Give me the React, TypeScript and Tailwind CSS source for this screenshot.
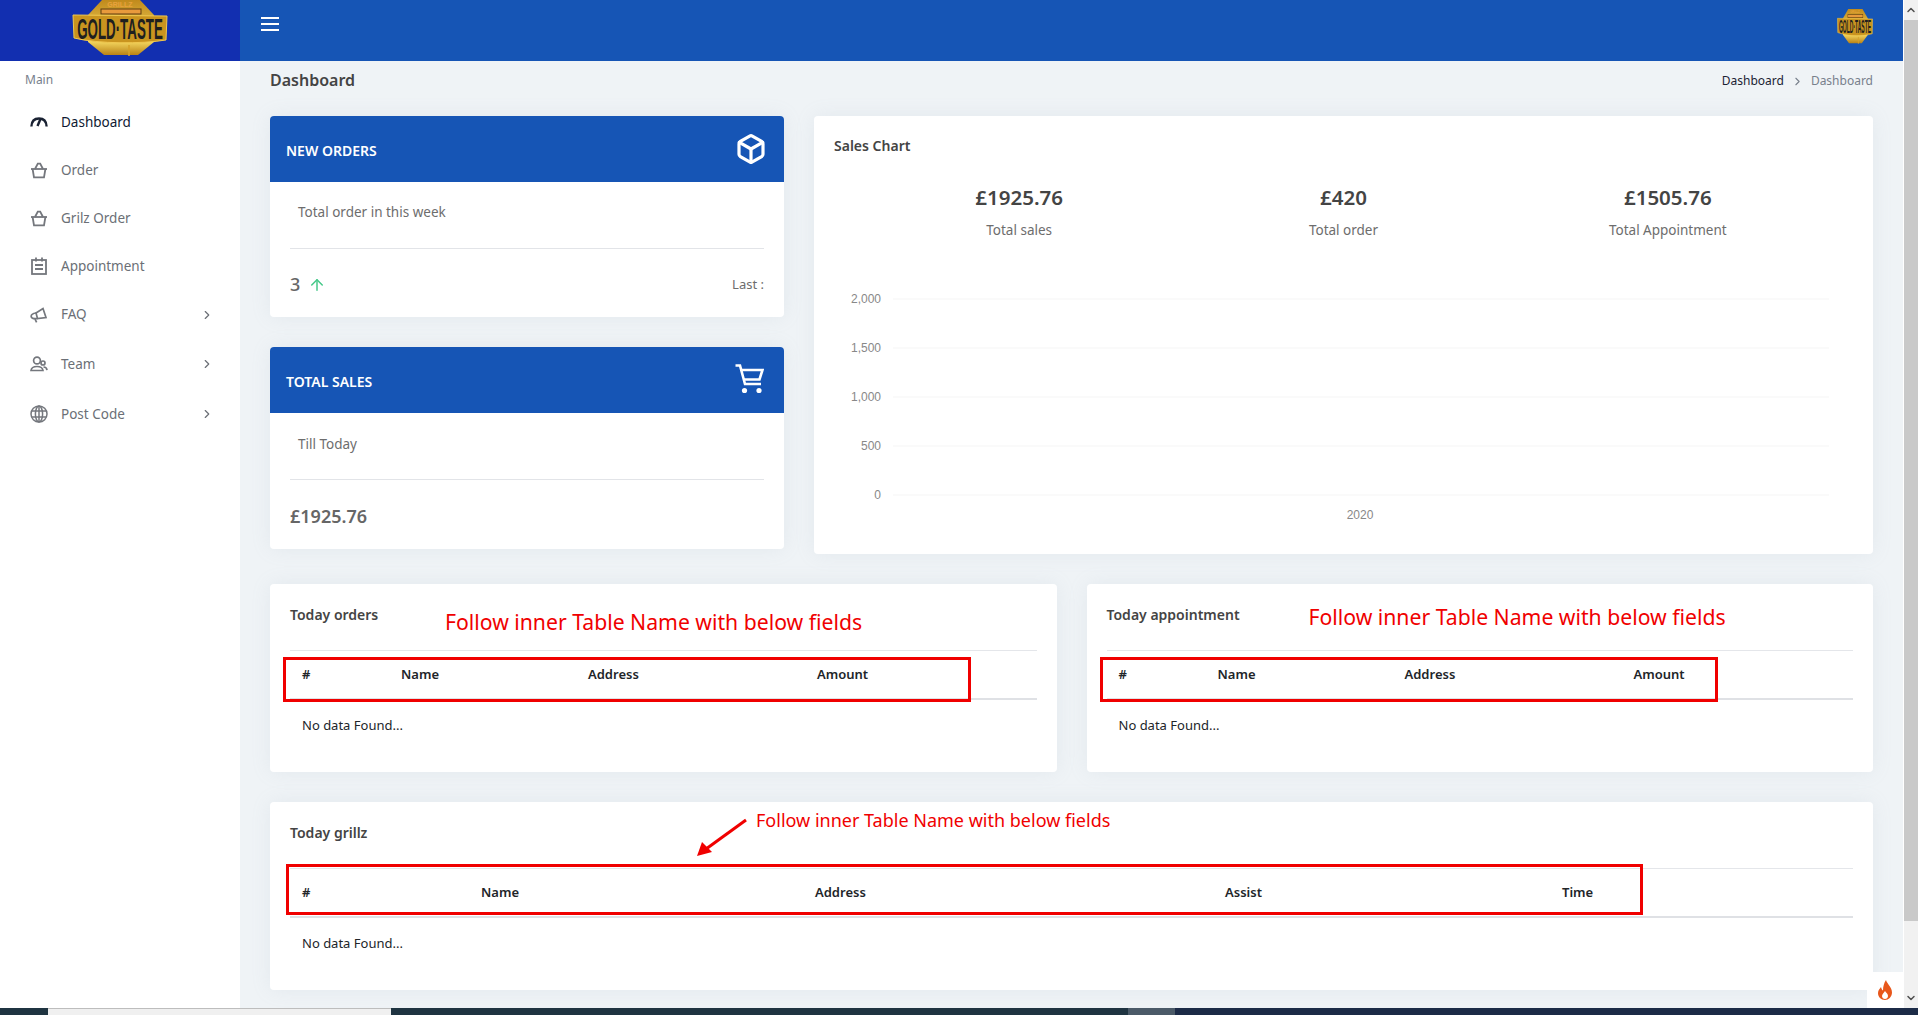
import React from "react";
import { ArrowUp, Box, ChevronDown, ChevronRight, ChevronUp } from "lucide-react";

type IconProps = { className?: string };

const Speedo = ({ className }: IconProps) => (
  <svg viewBox="0 0 18 18" className={className} fill="none" stroke="currentColor" strokeWidth="2.4">
    <path d="M1.4 13.5 C1.6 8.5 4.5 5.5 9 5.5 C13.5 5.5 16.4 8.5 16.6 13.5" />
    <path d="M7.5 13 L10.5 6" />
  </svg>
);

const Basket = ({ className }: IconProps) => (
  <svg viewBox="0 0 18 18" className={className} fill="none" stroke="currentColor" strokeWidth="1.8">
    <path d="M1 8 H17" />
    <path d="M2.6 8 L4 16.4 H14 L15.4 8" />
    <path d="M5 8 L7.8 2.6 H10.2 L13 8" />
  </svg>
);

const Notepad = ({ className }: IconProps) => (
  <svg viewBox="0 0 18 18" className={className} fill="none" stroke="currentColor" strokeWidth="1.8">
    <rect x="2" y="3" width="14" height="14" />
    <path d="M6 0.5 V4.5 M12 0.5 V4.5 M5 8 H13 M5 12 H13" />
  </svg>
);

const Horn = ({ className }: IconProps) => (
  <svg viewBox="0 0 18 18" className={className} fill="none" stroke="currentColor" strokeWidth="1.7">
    <path d="M6 7 L13 2.5 L16 11.5 L7.5 12.5 Z" />
    <path d="M6 7 C2.5 7.5 1 9 1.2 10.6 C1.5 12.4 4 13 7.5 12.5" />
    <path d="M5 13 L6.6 16.4" />
  </svg>
);

const Team = ({ className }: IconProps) => (
  <svg viewBox="0 0 18 18" className={className} fill="none" stroke="currentColor" strokeWidth="1.7">
    <circle cx="7" cy="5.5" r="3.4" />
    <circle cx="13" cy="8" r="2" />
    <path d="M1 15.5 C1.4 12.4 4 11.5 7 11.5 C10 11.5 12.6 12.4 13 15.5 Z" />
    <path d="M13.5 12 C15.4 12 16.8 13.2 17 15.2" />
  </svg>
);

const Earth = ({ className }: IconProps) => (
  <svg viewBox="0 0 18 18" className={className} fill="none" stroke="currentColor" strokeWidth="1.5">
    <circle cx="9" cy="9" r="8" />
    <ellipse cx="9" cy="9" rx="3.6" ry="8" />
    <path d="M9 1 V17 M1.8 6 H16.2 M1.8 12 H16.2" />
  </svg>
);

const Cart = ({ className }: IconProps) => (
  <svg viewBox="0 0 29 30" className={className} fill="none" stroke="currentColor" strokeWidth="2.6">
    <path d="M0.5 1.5 H5 L10 20 H26" />
    <path d="M6 6 H27.5 L24.5 15.5 H8.6" />
    <circle cx="9.5" cy="26.5" r="2.6" fill="currentColor" stroke="none" />
    <circle cx="24" cy="26.5" r="2.6" fill="currentColor" stroke="none" />
  </svg>
);

const Logo = ({ small }: { small?: boolean }) => {
  const id = small ? "gs" : "gl";
  return (
    <svg viewBox="0 0 96 58" className={small ? "w-[36px] h-[36px]" : "w-[96px] h-[58px]"} preserveAspectRatio="none">
      <defs>
        <linearGradient id={id} x1="0" y1="0" x2="0" y2="1">
          <stop offset="0" stopColor="#c08a1c" />
          <stop offset="0.75" stopColor="#f5d860" />
          <stop offset="1" stopColor="#b98216" />
        </linearGradient>
      </defs>
      <path d="M30 0 H68 L82 15 V42 L66 55 H32 L16 42 V15 Z" fill={`url(#${id})`} />
      <text x="48" y="7" textAnchor="middle" fontFamily="Liberation Sans" fontWeight="700" fontSize="7" fill="#e8a23c">GRILLZ</text>
      <rect x="29" y="9" width="40" height="5" fill="#e89a3c" stroke="#5c3c10" strokeWidth="1" />
      <path d="M1 15 L95 16 L94 40 C70 44 26 44 2 38 Z" fill="#c9941f" stroke="#f0c850" strokeWidth="1" />
      <g transform="translate(48 39) scale(0.46 1)">
        <text x="0" y="0" textAnchor="middle" fontFamily="Liberation Sans" fontWeight="700" fontSize="29" fill="#1f1f1f">GOLD·TASTE</text>
      </g>
      <path d="M57 45 V56" stroke="#d6a32a" strokeWidth="1.6" />
    </svg>
  );
};

const navItems = [
  { label: "Dashboard", icon: Speedo, active: true, h: "h-12" },
  { label: "Order", icon: Basket, h: "h-12" },
  { label: "Grilz Order", icon: Basket, h: "h-12" },
  { label: "Appointment", icon: Notepad, h: "h-12" },
  { label: "FAQ", icon: Horn, arrow: true, h: "h-[49px]" },
  { label: "Team", icon: Team, arrow: true, h: "h-[50px]" },
  { label: "Post Code", icon: Earth, arrow: true, h: "h-[50px]" },
];

const Sidebar = () => (
  <aside className="w-[240px] shrink-0 bg-white">
    <div className="pl-[25px] pt-[10px] h-[37px] text-[12px] leading-[18px] text-[#78808c]">Main</div>
    {navItems.map((item) => (
      <div key={item.label} className={`flex items-center pl-[30px] pr-[26px] ${item.h}`}>
        <item.icon className={`w-[18px] h-[18px] ${item.active ? "text-[#1a2233]" : "text-[#74777d]"}`} />
        <span className={`ml-[13px] flex-1 text-[13.5px] ${item.active ? "text-[#0f1a33]" : "text-[#6b6f76]"}`}>{item.label}</span>
        {item.arrow && <ChevronRight className="w-[14px] h-[14px] text-[#6b6f76]" />}
      </div>
    ))}
  </aside>
);

type StatCardProps = {
  title: string;
  icon: React.ReactNode;
  text: string;
  textPad: string;
  footer: React.ReactNode;
  bodyH: string;
};

const StatCard = ({ title, icon, text, textPad, footer, bodyH }: StatCardProps) => (
  <div className="bg-white rounded-[4px] shadow-[0_0_20px_rgba(150,165,185,0.12)] overflow-hidden">
    <div className="h-[66px] bg-[#1655b5] flex items-center justify-between pl-[16px] pr-[20px]">
      <span className="text-[14px] leading-[22px] pt-[4px] font-semibold text-white">{title}</span>
      {icon}
    </div>
    <div className={`px-[20px] ${bodyH} flex flex-col`}>
      <p className={`pl-[8px] h-[66px] text-[13.5px] leading-[20px] text-[#6d6d6d] ${textPad}`}>{text}</p>
      <div className="border-t border-[#e2e4e8] flex-1 flex items-center justify-between pt-[3px]">{footer}</div>
    </div>
  </div>
);

const Stat = ({ value, label }: { value: string; label: string }) => (
  <div className="flex-1 text-center">
    <div className="text-[20.5px] leading-[28px] font-semibold text-[#444]">{value}</div>
    <div className="mt-[9px] text-[13.5px] leading-[20px] text-[#6d6d6d]">{label}</div>
  </div>
);

const SalesChart = () => (
  <svg viewBox="0 0 1059 250" className="w-full h-[250px] block">
    {[
      ["2,000", 25],
      ["1,500", 74],
      ["1,000", 123],
      ["500", 172],
      ["0", 221],
    ].map(([label, y]) => (
      <g key={label}>
        <line x1="79" x2="1015" y1={y} y2={y} stroke="#f5f5f5" />
        <text x="67" y={Number(y) + 4} textAnchor="end" fontFamily="Liberation Sans" fontSize="12" fill="#888">{label}</text>
      </g>
    ))}
    <text x="546" y="245" textAnchor="middle" fontFamily="Liberation Sans" fontSize="12" fill="#888">2020</text>
  </svg>
);

type TableCardProps = {
  title: string;
  columns: { label: string; width: string }[];
  mark: string;
  note: string;
  noteClass: string;
  className?: string;
  children?: React.ReactNode;
};

const TableCard = ({ title, columns, mark, note, noteClass, className, children }: TableCardProps) => (
  <div className={`relative bg-white rounded-[4px] shadow-[0_0_20px_rgba(150,165,185,0.12)] px-[20px] h-[188px] ${className ?? ""}`}>
    <div className="h-[66px] pt-[20px] text-[14px] leading-[22px] font-semibold text-[#444]">{title}</div>
    <div className="flex items-center h-[50px] border-t border-[#e4e6ea] border-b-2 border-b-[#dfe1e5]">
      {columns.map((c) => (
        <div key={c.label} className={`${c.width} pl-[12px] text-[13px] font-semibold text-[#212529]`}>{c.label}</div>
      ))}
    </div>
    <div className="pl-[12px] pt-[15px] text-[13px] leading-[20px] text-[#212529]">No data Found...</div>
    <div className={`absolute border-[3px] border-[#f00000] ${mark}`} />
    <div className={`absolute text-[#f00000] ${noteClass}`}>{note}</div>
    {children}
  </div>
);

const innerColumns = [
  { label: "#", width: "w-[99px]" },
  { label: "Name", width: "w-[187px]" },
  { label: "Address", width: "w-[229px]" },
  { label: "Amount", width: "flex-1" },
];

export default function App() {
  return (
    <div className="h-screen w-full overflow-hidden flex flex-col bg-[#eff3f6] font-['Noto_Sans',sans-serif]">
      <div className="flex flex-1 min-h-0">
        <div className="flex-1 min-w-0 flex flex-col">
          <header className="h-[61px] shrink-0 flex">
            <div className="w-[240px] bg-[#122fb0] flex justify-center items-start overflow-hidden">
              <Logo />
            </div>
            <div className="flex-1 bg-[#1655b5] flex items-start justify-between pl-[21px] pr-[30px]">
              <div className="mt-[17px] w-[18px] flex flex-col gap-[4px]">
                <div className="h-[2px] bg-white" />
                <div className="h-[2px] bg-white" />
                <div className="h-[2px] bg-white" />
              </div>
              <div className="mt-[9px]"><Logo small /></div>
            </div>
          </header>
          <div className="flex flex-1 min-h-0">
            <Sidebar />
            <main className="flex-1 min-w-0 px-[30px] relative">
              <div className="h-[55px] flex items-start justify-between pt-[7px]">
                <h1 className="text-[16px] leading-[24px] font-semibold text-[#444]">Dashboard</h1>
                <div className="flex items-center pt-[1px] text-[12px] leading-[24px]">
                  <span className="text-[#1a2233]">Dashboard</span>
                  <ChevronRight className="w-[13px] h-[13px] mx-[7px] text-[#78808c]" />
                  <span className="text-[#78808c]">Dashboard</span>
                </div>
              </div>

              <div className="flex gap-[30px]">
                <div className="w-[514px] shrink-0 flex flex-col gap-[30px]">
                  <StatCard
                    title="NEW ORDERS"
                    icon={<Box className="w-[32px] h-[32px] -mr-[3px] text-white" strokeWidth={2.4} />}
                    text="Total order in this week"
                    textPad="pt-[20px]"
                    bodyH="h-[135px]"
                    footer={
                      <>
                        <span className="flex items-center text-[18px] font-medium text-[#666]">
                          3 <ArrowUp className="w-[18px] h-[18px] ml-[8px] text-[#47c98a]" />
                        </span>
                        <span className="text-[13px] text-[#6d6d6d]">Last :</span>
                      </>
                    }
                  />
                  <StatCard
                    title="TOTAL SALES"
                    icon={<Cart className="w-[29px] h-[30px] -mt-[3px] text-white" />}
                    text="Till Today"
                    textPad="pt-[21px]"
                    bodyH="h-[136px]"
                    footer={<span className="text-[18px] font-semibold text-[#666]">£1925.76</span>}
                  />
                </div>
                <div className="flex-1 min-w-0 h-[438px] bg-white rounded-[4px] shadow-[0_0_20px_rgba(150,165,185,0.12)]">
                  <div className="pl-[20px] pt-[19px] h-[66px] text-[14px] leading-[22px] font-semibold text-[#444]">Sales Chart</div>
                  <div className="flex px-[43px] h-[89px] pt-[1px]">
                    <Stat value="£1925.76" label="Total sales" />
                    <Stat value="£420" label="Total order" />
                    <Stat value="£1505.76" label="Total Appointment" />
                  </div>
                  <div className="pt-[3px]"><SalesChart /></div>
                </div>
              </div>

              <div className="flex gap-[30px] mt-[30px]">
                <TableCard
                  className="flex-1"
                  title="Today orders"
                  columns={innerColumns}
                  mark="left-[13px] top-[73px] w-[688px] h-[45px]"
                  note="Follow inner Table Name with below fields"
                  noteClass="left-[175px] top-[24px] text-[21.2px] leading-[28px]"
                />
                <TableCard
                  className="flex-1"
                  title="Today appointment"
                  columns={innerColumns}
                  mark="left-[13px] top-[73px] w-[618px] h-[45px]"
                  note="Follow inner Table Name with below fields"
                  noteClass="left-[222px] top-[19px] text-[21.2px] leading-[28px]"
                />
              </div>

              <div className="mt-[30px]">
                <TableCard
                  title="Today grillz"
                  columns={[
                    { label: "#", width: "w-[179px]" },
                    { label: "Name", width: "w-[334px]" },
                    { label: "Address", width: "w-[410px]" },
                    { label: "Assist", width: "w-[337px]" },
                    { label: "Time", width: "flex-1" },
                  ]}
                  mark="left-[16px] top-[62px] w-[1357px] h-[51px]"
                  note="Follow inner Table Name with below fields"
                  noteClass="left-[486px] top-[5px] text-[18px] leading-[26px]"
                >
                  <svg viewBox="0 0 52 40" className="absolute left-[426px] top-[16px] w-[52px] h-[40px]">
                    <path d="M50 2 L10 31" stroke="#f00000" strokeWidth="3" />
                    <path d="M1 38 L6 24 L16 34 Z" fill="#f00000" />
                  </svg>
                </TableCard>
              </div>

              <div className="absolute right-0 bottom-0 w-[36px] h-[36px] bg-white flex items-center justify-center">
                <svg viewBox="0 0 16 20" className="w-[16px] h-[20px]">
                  <path d="M9 0 C10 4 15 7 15 12.5 C15 17 11.5 20 8 20 C4 20 1 17 1 13 C1 10 3 8.5 4 7 C4.5 9 5 10 6 10.5 C6 6.5 7 3 9 0 Z" fill="#e8571b" />
                  <path d="M8 11 C9 13 11 13.5 11 16 C11 18 9.5 19 8 19 C6.5 19 5 18 5 16 C5 14 7 13 8 11 Z" fill="#fff" />
                </svg>
              </div>
            </main>
          </div>
        </div>
        <div className="w-[15px] shrink-0 bg-[#f1f1f1] border-l border-white flex flex-col">
          <div className="h-[20px] flex items-center justify-center"><ChevronUp className="w-[12px] h-[12px] text-[#505050]" strokeWidth={3} /></div>
          <div className="h-[901px] bg-[#c9c9c9]" />
          <div className="flex-1" />
          <div className="h-[20px] flex items-center justify-center"><ChevronDown className="w-[12px] h-[12px] text-[#505050]" strokeWidth={3} /></div>
        </div>
      </div>
      <div className="h-[7px] shrink-0 flex bg-[#1f3441]">
        <div className="w-[48px]" />
        <div className="w-[343px] bg-[#f0f0f0] border-t border-[#bdbdbd]" />
        <div className="w-[737px]" />
        <div className="w-[47px] bg-[#4b5a68]" />
        <div className="flex-1 bg-[#1c2b47]" />
      </div>
    </div>
  );
}
